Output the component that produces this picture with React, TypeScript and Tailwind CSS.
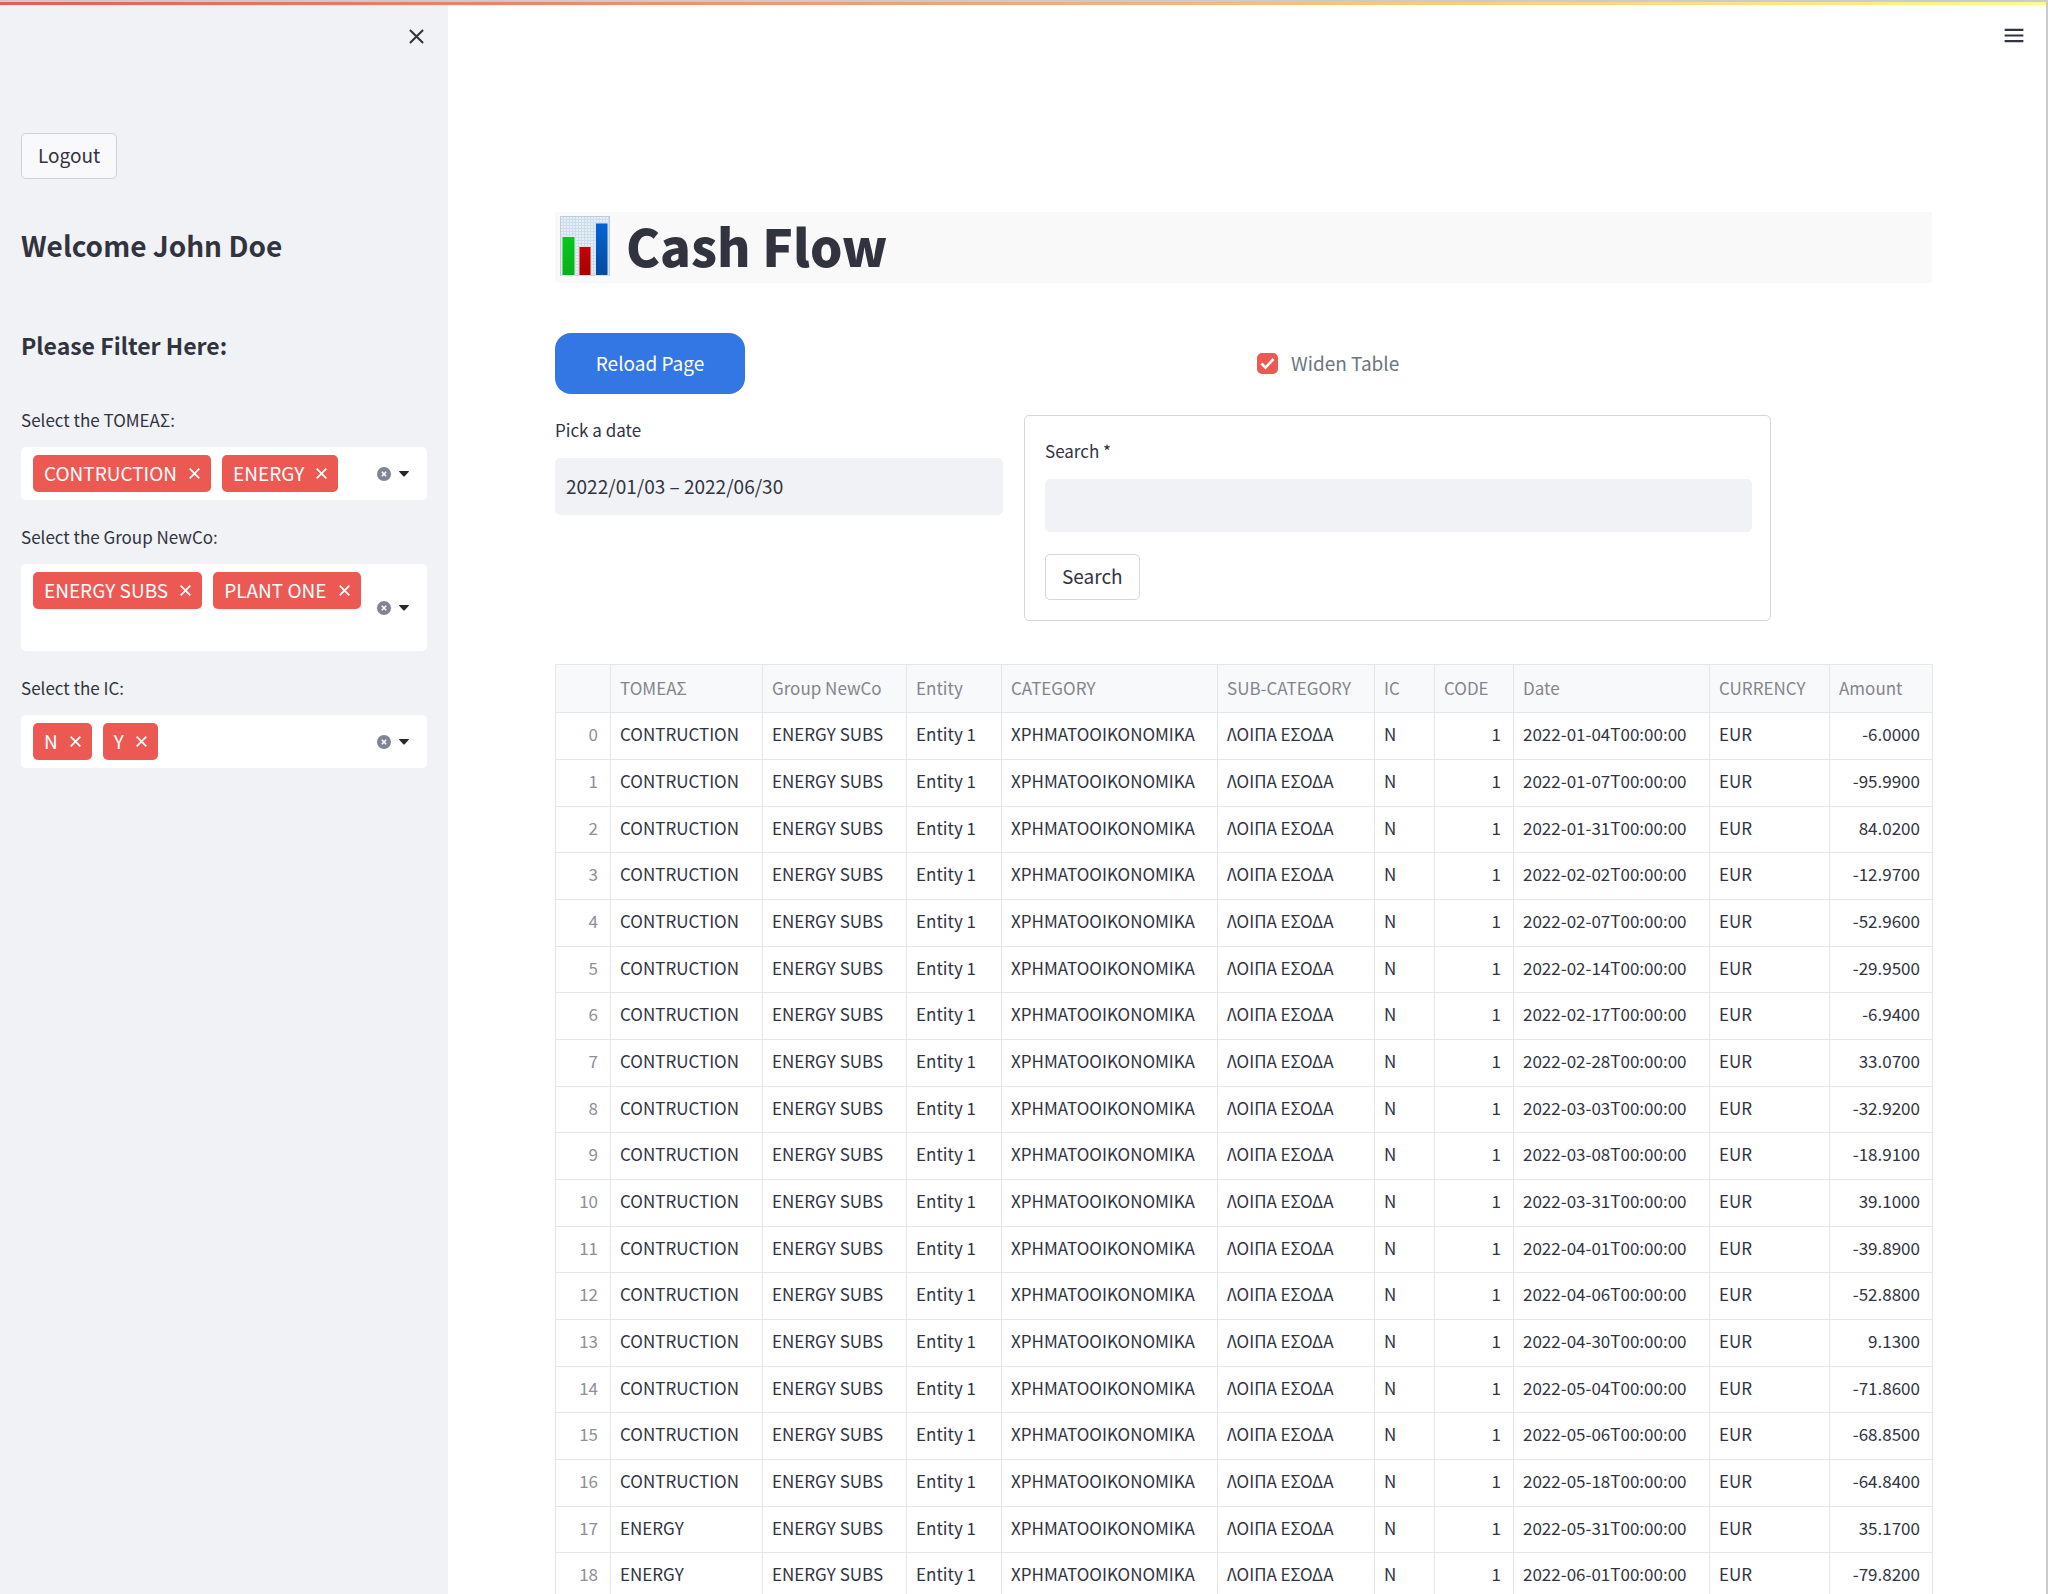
import { useState } from "react";

type Row = { sector: string; date: string; amount: string };

const c = (date: string, amount: string, sector = "CONTRUCTION"): Row => ({ sector, date, amount });

const rows: Row[] = [
  c("2022-01-04", "-6.0000"),
  c("2022-01-07", "-95.9900"),
  c("2022-01-31", "84.0200"),
  c("2022-02-02", "-12.9700"),
  c("2022-02-07", "-52.9600"),
  c("2022-02-14", "-29.9500"),
  c("2022-02-17", "-6.9400"),
  c("2022-02-28", "33.0700"),
  c("2022-03-03", "-32.9200"),
  c("2022-03-08", "-18.9100"),
  c("2022-03-31", "39.1000"),
  c("2022-04-01", "-39.8900"),
  c("2022-04-06", "-52.8800"),
  c("2022-04-30", "9.1300"),
  c("2022-05-04", "-71.8600"),
  c("2022-05-06", "-68.8500"),
  c("2022-05-18", "-64.8400"),
  c("2022-05-31", "35.1700", "ENERGY"),
  c("2022-06-01", "-79.8200", "ENERGY"),
];

const columns = [
  { title: "", width: 55 },
  { title: "ΤΟΜΕΑΣ", width: 152 },
  { title: "Group NewCo", width: 144 },
  { title: "Entity", width: 95 },
  { title: "CATEGORY", width: 216 },
  { title: "SUB-CATEGORY", width: 157 },
  { title: "IC", width: 60 },
  { title: "CODE", width: 79 },
  { title: "Date", width: 196 },
  { title: "CURRENCY", width: 120 },
  { title: "Amount", width: 103 },
];

function Cross({ className }: { className: string }) {
  return (
    <svg viewBox="0 0 16 16" className={className} fill="none" stroke="currentColor" aria-hidden="true">
      <path d="M1 1 15 15M15 1 1 15" />
    </svg>
  );
}

function ChartEmoji() {
  return (
    <svg viewBox="0 0 50 60" className="h-[60px] w-[50px] shrink-0" aria-hidden="true">
      <defs>
        <pattern id="grid" width="3" height="3" patternUnits="userSpaceOnUse">
          <rect width="3" height="3" fill="#e9eef2" />
          <path d="M0 .5h3M.5 0v3" stroke="#c6deed" strokeWidth="1" />
        </pattern>
        <linearGradient id="green" x2="0" y2="1">
          <stop stopColor="#06c81d" />
          <stop offset="1" stopColor="#0bae1d" />
        </linearGradient>
        <linearGradient id="red" x2="0" y2="1">
          <stop stopColor="#c40404" />
          <stop offset="1" stopColor="#a60000" />
        </linearGradient>
        <linearGradient id="blue" x2="0" y2="1">
          <stop stopColor="#0463d2" />
          <stop offset="1" stopColor="#054ba0" />
        </linearGradient>
      </defs>
      <rect x=".5" y=".5" width="49" height="59" fill="url(#grid)" stroke="#c3cbd2" />
      <rect x="2" y="20.500" width="13" height="39" fill="url(#green)" stroke="#d7efdc" />
      <rect x="19" y="30.500" width="12" height="29" fill="url(#red)" stroke="#eed7da" />
      <rect x="35.500" y="7" width="12.500" height="52.500" fill="url(#blue)" stroke="#d3e2f3" />
    </svg>
  );
}

function MultiSelect({ label, initial, tall = false }: { label: string; initial: string[]; tall?: boolean }) {
  const [items, setItems] = useState(initial);
  return (
    <div role="group" aria-label={label}>
      <div className="mb-3 text-[17px] leading-[30px]">{label}</div>
      <div
        className={
          tall
            ? "flex min-h-[87px] items-center rounded-[5px] bg-white pr-[18px] pl-3"
            : "flex min-h-[53px] items-center rounded-[5px] bg-white pr-[18px] pl-3"
        }
      >
        <div className="flex min-w-0 flex-1 gap-[11px] self-start pt-2">
          {items.map((item) => (
            <span
              key={item}
              className="flex h-[37px] items-center gap-3 rounded-[5px] bg-[#ec5953] px-[11px] text-[19px] whitespace-nowrap text-white"
            >
              {item}
              <button
                type="button"
                aria-label={"Remove " + item}
                onClick={() => setItems(items.filter((i) => i !== item))}
              >
                <Cross className="size-[11px] stroke-[2.6]" />
              </button>
            </span>
          ))}
        </div>
        <button type="button" aria-label="Clear all" className="mr-2" onClick={() => setItems([])}>
          <svg viewBox="0 0 14 14" className="size-[14px]" aria-hidden="true">
            <circle cx="7" cy="7" r="7" fill="#808495" />
            <path d="M4.800 4.800 9.200 9.200M9.200 4.800 4.800 9.200" stroke="#fff" strokeWidth="1.600" />
          </svg>
        </button>
        <button type="button" aria-label="Open list">
          <svg viewBox="0 0 10 6" className="h-[6px] w-[10px]" aria-hidden="true">
            <path d="M.5 0h9c.4 0 .6.500.3.800L5.700 5.200c-.4.400-1 .4-1.400 0L.2.800C-.1.500.1 0 .5 0Z" fill="#262730" />
          </svg>
        </button>
      </div>
    </div>
  );
}

const headCell = "truncate border-r border-b border-[#e6e6e9] pr-3 pb-0.5 pl-[9px] font-normal";
const cell = "truncate border-r border-b border-[#e6e6e9] pr-3 pb-1 pl-[9px]";

export default function App() {
  const [wide, setWide] = useState(true);
  return (
    <div className="flex h-screen flex-col overflow-hidden border-t-2 border-r-2 border-[#cbcacf] bg-white font-['Noto_Sans_CJK_SC','Source_Sans_Pro',sans-serif] text-[#31333f]">
      <div className="h-[3px] shrink-0 bg-linear-to-r from-[#ec5953] via-[#f5a96c] to-[#fdfb87]" />
      <div className="flex min-h-0 flex-1">
        <aside className="flex w-[448px] shrink-0 flex-col bg-[#f0f2f6] px-[21px]">
          <button type="button" aria-label="Close sidebar" className="mt-6 mr-[3px] self-end">
            <Cross className="size-[15px] stroke-[2.200]" />
          </button>
          <button
            type="button"
            className="mt-[89px] h-[46px] self-start rounded-[5px] border border-[#d0d1d5] bg-[#f9f9fb] px-4 pb-0.5 text-[19px]"
          >
            Logout
          </button>
          <h2 className="mt-[46px] text-[28px] leading-[40px] font-bold">Welcome John Doe</h2>
          <h3 className="mt-[64px] text-[23px] leading-[32px] font-bold">Please Filter Here:</h3>
          <div className="mt-[44px] flex flex-col gap-[22px]">
            <MultiSelect label="Select the ΤΟΜΕΑΣ:" initial={["CONTRUCTION", "ENERGY"]} />
            <MultiSelect label="Select the Group NewCo:" initial={["ENERGY SUBS", "PLANT ONE"]} tall />
            <MultiSelect label="Select the IC:" initial={["N", "Y"]} />
          </div>
        </aside>

        <main className="min-w-0 flex-1 overflow-y-auto [scrollbar-width:none]">
          <header className="flex justify-end pt-[23px] pr-[22px]">
            <button type="button" aria-label="Main menu">
              <svg viewBox="0 0 20 16" className="h-[15px] w-5" aria-hidden="true">
                <path d="M0 2h20M0 8h20M0 14h20" stroke="#31333f" strokeWidth="2.300" />
              </svg>
            </button>
          </header>

          <div className="pt-[169px] pr-[114px] pl-[107px]">
            <h1 className="flex h-[71px] items-center gap-4 bg-[#f9f9f9] pb-1 pl-[5px] text-[51px] leading-[67px] font-black">
              <ChartEmoji />
              Cash Flow
            </h1>

            <div className="mt-[50px] grid grid-cols-2 items-center gap-[21px]">
              <button
                type="button"
                className="h-[61px] w-[190px] rounded-[16px] bg-[#3377e5] text-[19px] text-white"
              >
                Reload Page
              </button>
              <label className="flex items-center gap-[13px] pl-[3px] text-[19px] text-[#6c757d]">
                <span className="grid size-[21px] place-items-center">
                  <input
                    type="checkbox"
                    checked={wide}
                    onChange={(e) => setWide(e.target.checked)}
                    className="col-start-1 row-start-1 size-[21px] appearance-none rounded-[5px] border-2 border-[#ec5953] checked:bg-[#ec5953]"
                  />
                  <svg viewBox="0 0 21 21" className="pointer-events-none col-start-1 row-start-1 size-[21px]" fill="none" aria-hidden="true">
                    <path d="m4.500 10.500 4 4.200 8-8.700" stroke="#fff" strokeWidth="2.600" />
                  </svg>
                </span>
                Widen Table
              </label>
            </div>

            <div className="mt-[21px] grid grid-cols-[448fr_747fr_140fr] items-start gap-[21px]">
              <div>
                <label htmlFor="date" className="mb-[13px] block text-[17px] leading-[30px]">
                  Pick a date
                </label>
                <input
                  id="date"
                  defaultValue="2022/01/03 – 2022/06/30"
                  className="h-[57px] w-full rounded-[5px] bg-[#f0f2f6] px-[11px] pb-0.5 text-[19px]"
                />
              </div>
              <form
                className="rounded-[5px] border border-[#d6d6d9] py-5 pr-[18px] pl-5"
                onSubmit={(e) => e.preventDefault()}
              >
                <label htmlFor="search" className="mb-[13px] block text-[17px] leading-[30px]">
                  Search *
                </label>
                <input id="search" className="h-[53px] w-full rounded-[5px] bg-[#f0f2f6] px-[11px] pb-0.5 text-[19px]" />
                <button
                  type="submit"
                  className="mt-[22px] block h-[46px] rounded-[5px] border border-[#d6d6d9] bg-white px-4 pb-0.5 text-[19px]"
                >
                  Search
                </button>
              </form>
            </div>

            <table className="mt-[43px] w-full table-fixed border-separate border-spacing-0 border-t border-l border-[#e6e6e9] text-[17px]">
              <colgroup>
                {columns.map((col) => (
                  <col key={col.title} style={{ width: col.width }} />
                ))}
              </colgroup>
              <thead>
                <tr className="h-[48px] bg-[#f8f9fb] text-left text-[#84858c]">
                  {columns.map((col) => (
                    <th key={col.title} scope="col" className={headCell}>
                      {col.title}
                    </th>
                  ))}
                </tr>
              </thead>
              <tbody>
                {rows.map((row, i) => (
                  <tr key={row.date} className="h-[47px] nth-[3n]:h-[46px]">
                    <th scope="row" className={cell + " text-right font-normal text-[#8e8f96]"}>
                      {i}
                    </th>
                    <td className={cell}>{row.sector}</td>
                    <td className={cell}>ENERGY SUBS</td>
                    <td className={cell}>Entity 1</td>
                    <td className={cell}>ΧΡΗΜΑΤΟΟΙΚΟΝΟΜΙΚΑ</td>
                    <td className={cell}>ΛΟΙΠΑ ΕΣΟΔΑ</td>
                    <td className={cell}>N</td>
                    <td className={cell + " text-right"}>1</td>
                    <td className={cell}>{row.date}T00:00:00</td>
                    <td className={cell}>EUR</td>
                    <td className={cell + " text-right"}>{row.amount}</td>
                  </tr>
                ))}
              </tbody>
            </table>
          </div>
        </main>
      </div>
    </div>
  );
}
